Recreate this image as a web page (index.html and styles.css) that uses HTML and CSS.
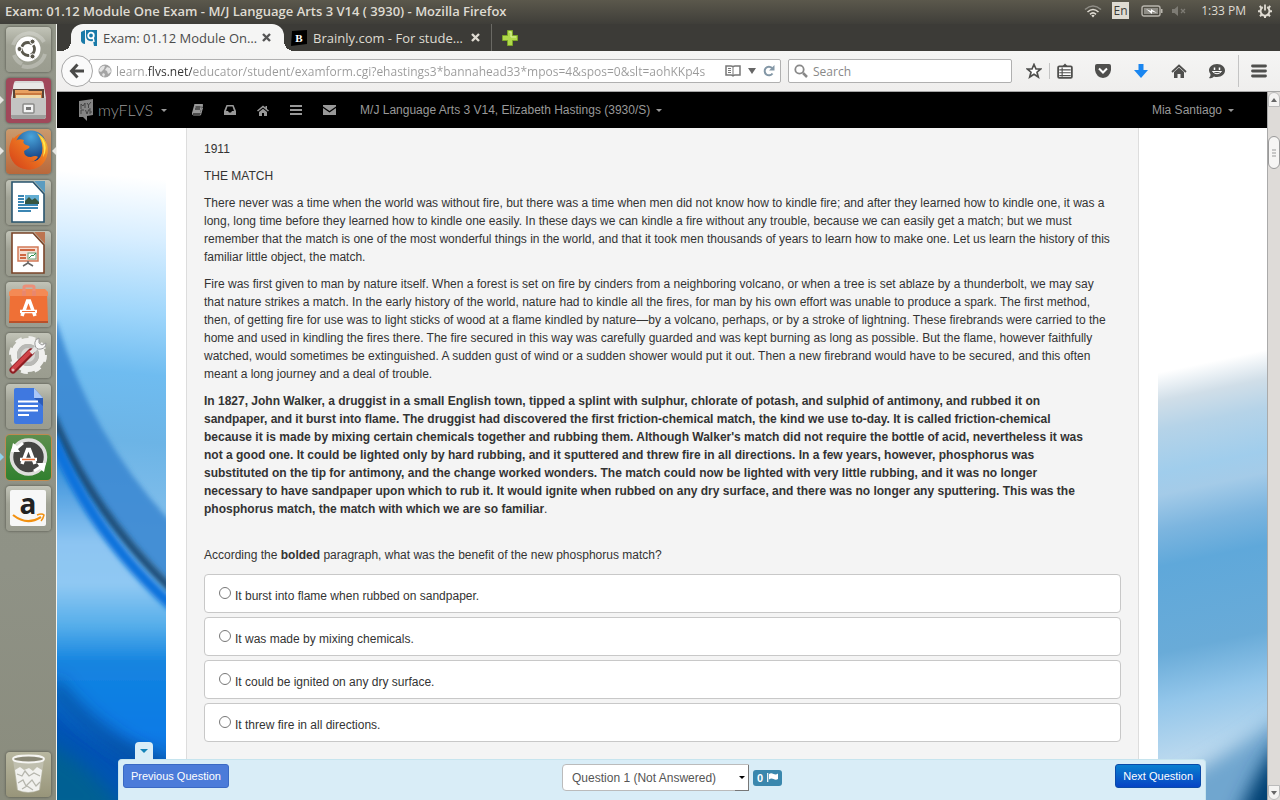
FILE: index.html
```html
<!DOCTYPE html>
<html lang="en">
  <head>
    <meta charset="UTF-8" />
    <meta name="viewport" content="width=device-width, initial-scale=1.0" />
    <title>Exam: 01.12 Module One Exam - M/J Language Arts 3 V14 ( 3930)</title>
    <link rel="stylesheet" href="styles.css">
  </head>
  <body>
    <!-- System panel -->
    <header class="panel">
      <div class="panel-title">Exam: 01.12 Module One Exam - M/J Language Arts 3 V14 ( 3930) - Mozilla Firefox</div>
      <div class="indicators">
        <svg width="18" height="14" viewBox="0 0 18 14" fill="none" stroke-width="1.6">
          <path d="M1 5.5Q9-1.5 17 5.5" stroke="#8f8d86"/>
          <path d="M3.5 8Q9 3 14.5 8" stroke="#dfdbd2"/>
          <path d="M6 10.3Q9 7.5 12 10.3" stroke="#dfdbd2"/>
          <path d="M7.3 11.5L9 13.5L10.7 11.5Q9 10.2 7.3 11.5Z" fill="#dfdbd2"/>
        </svg>
        <span class="lang">En</span>
        <svg class="battery" width="22" height="12" viewBox="0 0 22 12">
          <rect x="1" y="1" width="18" height="10" rx="2" fill="none" stroke="#b8b5ad" stroke-width="1.4"/>
          <rect x="3" y="3" width="14" height="6" fill="#8f8d86"/>
          <path d="M20 4h1.5v4H20z" fill="#b8b5ad"/>
          <path d="M5 4l5 2V4l6 4-5-1.500V9z" fill="#fff"/>
        </svg>
        <svg class="mute" width="16" height="12" viewBox="0 0 16 12">
          <path d="M1 4h2.500L7 1v10L3.500 8H1z" fill="#7d7b74"/>
          <path d="M10 4l4 4M14 4l-4 4" stroke="#7d7b74" stroke-width="1.3"/>
        </svg>
        <span class="clock">1:33 PM</span>
        <svg width="14" height="14" viewBox="0 0 14 14" fill="none" stroke="#dfdbd2">
          <path d="M4.800 3.200A4.500 4.500 0 1 0 9.200 3.200" stroke-width="2"/>
          <path d="M7 0.500V6.500" stroke-width="1.800"/>
          <path d="M3.300 3.600L1.700 2M10.700 3.600L12.300 2M2 7.300H0M12 7.300H14M3.700 10.500L2 12.300M10.300 10.500L12 12.300M7 12V14" stroke-width="2"/>
        </svg>
      </div>
    </header>

    <div class="desktop">
      <!-- Launcher -->
      <nav class="launcher" aria-label="Launcher">
        <button class="tile" aria-label="Dash">
          <svg viewBox="0 0 45 45">
            <path d="M7 18A17 17 0 0 1 38 15M39 27A18 18 0 0 1 16 39M8 28A16 16 0 0 0 16 37" fill="none" stroke="#fff" stroke-opacity=".25" stroke-width="4"/>
            <circle cx="22" cy="22" r="12.500" fill="#fff"/>
            <circle cx="22" cy="22" r="6.500" fill="none" stroke="#5a584d" stroke-width="2.800" stroke-dasharray="12 1.600" stroke-dashoffset="5"/>
            <g fill="#5a584d" stroke="#fff" stroke-width="1"><circle cx="13.500" cy="22" r="2.500"/><circle cx="26.500" cy="14.600" r="2.500"/><circle cx="26.500" cy="29.400" r="2.500"/></g>
          </svg>
        </button>
        <button class="tile files running" aria-label="Files">
          <svg viewBox="0 0 45 45">
            <path d="M8 5Q8 3 10 3H35Q37 3 37.500 5L40 20V38Q40 41 37 41H8Q5 41 5 38V20Z" fill="#d8d8d6"/>
            <path d="M8 5H37L39 18H6Z" fill="#e8e8e6"/>
            <path d="M7 11H38V20H7Z" fill="#5b4437"/>
            <path d="M9 12H22L23 13H36V20H9Z" fill="#e8a060"/>
            <path d="M9 15H36V20H9Z" fill="#c9783f"/><path d="M10 17H35V20H10Z" fill="#f0d9a8"/>
            <path d="M5 20H40V38Q40 41 37 41H8Q5 41 5 38Z" fill="#c4c4c3"/>
            <path d="M5 37H40V38Q40 41 37 41H8Q5 41 5 38Z" fill="#9e9e9c"/>
            <rect x="17" y="26" width="11" height="9" rx="1" fill="#f3f3f3" stroke="#8a8a89" stroke-width="1.500"/>
            <rect x="20" y="29" width="5" height="3" fill="#777"/>
          </svg>
        </button>
        <button class="tile firefox running active" aria-label="Firefox">
          <svg viewBox="0 0 45 45">
            <defs>
              <radialGradient id="globe" cx=".5" cy=".2" r=".8"><stop offset="0" stop-color="#49a5dc"/><stop offset="1" stop-color="#123a7c"/></radialGradient>
              <linearGradient id="fox" x1="1" y1="0" x2="0" y2="1"><stop offset="0" stop-color="#fbd83a"/><stop offset=".4" stop-color="#ee7a22"/><stop offset="1" stop-color="#d43c17"/></linearGradient>
            </defs>
            <circle cx="22.500" cy="21.500" r="19" fill="url(#fox)"/>
            <circle cx="25" cy="17" r="15.500" fill="url(#globe)"/>
            <path d="M31 4Q43 10 41.500 24Q39 39 24 40.500Q8 40 4 26Q2 16 7 8L9 12Q13 9 18 11Q16 14 20 16Q25 17 23 19L18 22Q18 28 25 28Q30 26 32 28Q29 33 23 33Q33 34 36 24Q38 14 31 4Z" fill="url(#fox)"/>
            <path d="M33 6Q42 13 39 24L37 28Q40 15 33 6Z" fill="#ffe84c"/>
          </svg>
        </button>
        <button class="tile" aria-label="LibreOffice Writer">
          <svg viewBox="0 0 45 45">
            <path d="M6 2H27L38 14V42H6Z" fill="#fff" stroke="#29546e" stroke-width="1.600"/>
            <path d="M28 1H39V13Z" fill="#5b9cc0"/>
            <path d="M12 16H18M12 19H18M12 22H18M12 25H32M12 28H32M12 31H25" stroke="#3b86b3" stroke-width="2"/>
            <rect x="19" y="15" width="14" height="9" fill="#62add2"/><path d="M19 24V21L23 17L26 20L29 18L33 22V24Z" fill="#35543f"/>
          </svg>
        </button>
        <button class="tile" aria-label="LibreOffice Impress">
          <svg viewBox="0 0 45 45">
            <path d="M6 2H27L38 14V42H6Z" fill="#fff" stroke="#7a4428" stroke-width="1.600"/>
            <path d="M28 1H39V13Z" fill="#bd7551"/>
            <rect x="12" y="16" width="20" height="14" fill="#f6ddd2" stroke="#d27957" stroke-width="1.500"/>
            <path d="M14 19H29M14 24H20M14 27H20" stroke="#cf6844" stroke-width="2"/>
            <rect x="22" y="22" width="8" height="6" fill="#fff" stroke="#6d9d75"/><path d="M23 27L26 24L27 25L30 22" stroke="#2c8f4b" fill="none"/>
            <path d="M22 30V32L17 35M22 32L27 35" stroke="#666" stroke-width="1.500" fill="none"/>
          </svg>
        </button>
        <button class="tile" aria-label="Software Center">
          <svg viewBox="0 0 45 45">
            <path d="M4 10H41L42 40H3Z" fill="#ef7036"/><path d="M3 39H42V41H3Z" fill="#b9502a"/>
            <path d="M3 10L6 7H39L42 10V14H3Z" fill="#f48a55"/>
            <path d="M18 12V5Q18 4 20 4H26Q28 4 28 5V12" fill="none" stroke="#ec8f78" stroke-width="3"/>
            <path d="M16 9H20V14H16ZM26 9H30V14H26Z" fill="#e9876c"/>
            <path d="M16 34L21.500 19H23.500L29 34M14 29.500H31" fill="none" stroke="#fff" stroke-width="3.500"/><path d="M16 29.500H29" stroke="#ef7036"/>
          </svg>
        </button>
        <button class="tile" aria-label="System Settings">
          <svg viewBox="0 0 45 45">
            <circle cx="22" cy="22" r="14" fill="none" stroke="#f0f0ee" stroke-width="6"/>
            <circle cx="22" cy="22" r="16.500" fill="none" stroke="#f0f0ee" stroke-width="5" stroke-dasharray="6.500 6.460"/>
            <circle cx="22" cy="22" r="11" fill="#b9b9b6"/><circle cx="22" cy="22" r="7" fill="#d8d8d5"/>
            <path d="M7 37L25 19" stroke="#8e1d22" stroke-width="7" stroke-linecap="round"/>
            <path d="M7 36L24 19" stroke="#cf4348" stroke-width="4" stroke-linecap="round"/>
            <path d="M25 20L31 14" stroke="#e3e3e2" stroke-width="4"/>
            <path d="M33 5Q28 7 29 12Q30 17 35 16Q40 15 40 10L36 12L33 10Z" fill="#f7f7f7" stroke="#999"/>
            <circle cx="7" cy="37" r="1.500" fill="#e8b4b4"/>
          </svg>
        </button>
        <button class="tile" aria-label="Documents">
          <svg viewBox="0 0 45 45">
            <path d="M10 4H28L37 14V38Q37 40 35 40H10Q8 40 8 38V6Q8 4 10 4Z" fill="#3f78e0"/>
            <path d="M28 4L37 14H28Z" fill="#a9c6f7"/><path d="M28 14H37V22Z" fill="#2a5cba"/>
            <path d="M12 17.500H32M12 22H32M12 26.500H32M12 31H23" stroke="#fff" stroke-width="2"/>
          </svg>
        </button>
        <button class="tile updater running" aria-label="Software Updater">
          <svg viewBox="0 0 45 45">
            <circle cx="22.500" cy="22" r="17" fill="#454543" stroke="#dededc" stroke-width="3.500"/>
            <path d="M5 17L7 8L11 11L16 7L18 9L12 14L14 17Z" fill="#fff"/><path d="M40 28L38 37L34 34L29 37L27 35L33 31L31 28Z" fill="#fff"/>
            <path d="M16 29L21.500 14.500H23.500L29 29M14 24.500H31" fill="none" stroke="#fff" stroke-width="3.500"/><path d="M16 24.500H29" stroke="#e96e37" stroke-width="1.500"/>
          </svg>
        </button>
        <button class="tile" aria-label="Amazon">
          <svg viewBox="0 0 45 45">
            <rect x="4" y="4" width="36" height="36" rx="2" fill="#f7f7f7"/>
            <text x="22" y="28" class="amazon-letter">a</text>
            <path d="M7 29Q21 40 35 31" fill="none" stroke="#f29111" stroke-width="2.200"/><path d="M31 29Q36 27 38 29Q37 33 35 35" fill="none" stroke="#f29111" stroke-width="1.500"/>
          </svg>
        </button>
        <button class="tile trash" aria-label="Trash">
          <svg viewBox="0 0 45 45">
            <path d="M7 7L11 38Q22 44 34 38L38 7Z" fill="#c9c9bd" fill-opacity=".65"/>
            <path d="M9 18L14 15L18 18L23 16L27 19L31 15L36 18L33 38Q22 42 12 38Z" fill="#f1f1ee"/>
            <path d="M11 22L16 24L19 19L23 24L28 21L34 24M12 31L17 28L20 34L26 28L30 34L34 30M16 37L21 34L27 38" fill="none" stroke="#b5b5ac" stroke-width="1.300"/>
            <ellipse cx="22.500" cy="7" rx="15.500" ry="3.500" fill="#8a8876" stroke="#f5f5f2" stroke-width="1.800"/>
          </svg>
        </button>
      </nav>

      <div class="window">
        <!-- Browser tabs -->
        <div class="tabs">
          <div class="tab current">
            <svg class="favicon" width="16" height="16" viewBox="0 0 16 16">
              <path d="M0 2L4 0V14Q1 14 0 11Z" fill="#197aa8"/><path d="M5 0H16V16H13L12 11Q5 12 5 6Z" fill="#197aa8"/>
              <circle cx="10" cy="5.500" r="2.800" fill="none" stroke="#fff" stroke-width="1.800"/><path d="M12 7L13 12" stroke="#fff" stroke-width="1.500"/>
            </svg>
            <span class="tab-title">Exam: 01.12 Module On…</span>
            <button class="tab-close" aria-label="Close tab"><svg width="9" height="9" viewBox="0 0 9 9"><path d="M1 1L8 8M8 1L1 8" stroke="currentColor" stroke-width="2.400"/></svg></button>
          </div>
          <div class="tab">
            <svg class="favicon" width="16" height="16" viewBox="0 0 16 16"><path d="M1 1L16 0V14L0 16Z" fill="#000"/><text x="8" y="12" class="brainly-letter">B</text></svg>
            <span class="tab-title">Brainly.com - For stude…</span>
            <button class="tab-close" aria-label="Close tab"><svg width="9" height="9" viewBox="0 0 9 9"><path d="M1 1L8 8M8 1L1 8" stroke="currentColor" stroke-width="2.400"/></svg></button>
          </div>
          <button class="new-tab" aria-label="New tab"><svg width="16" height="16" viewBox="0 0 16 16"><path d="M5.500.5H10.500V5.500H15.500V10.500H10.500V15.500H5.500V10.500H.5V5.500H5.500Z" fill="#b0d94a" stroke="#7ba428"/><path d="M7 2H9V7H14" fill="none" stroke="#dcf3a0"/></svg></button>
        </div>

        <!-- Navigation toolbar -->
        <div class="toolbar">
          <button class="back" aria-label="Back"><svg width="16" height="16" viewBox="0 0 16 16" fill="none" stroke="#4a4a48" stroke-width="3"><path d="M8.500 1.500L2.500 8L8.500 14.500M3 8H15"/></svg></button>
          <div class="urlbar">
            <svg width="14" height="14" viewBox="0 0 14 14"><circle cx="7" cy="7" r="6.500" fill="#a4a4a4"/><path d="M2 4Q5 1 7 2L6 5L3 8L1 7ZM9 3L12 4L13 8L10 10L9 7L7 6ZM5 9L7 10L6 13L4 11Z" fill="#e4e4e4"/></svg>
            <input class="url" type="text" aria-label="Address" value="learn.flvs.net/educator/student/examform.cgi?ehastings3*bannahead33*mpos=4&amp;spos=0&amp;slt=aohKKp4s">
            <svg width="16" height="14" viewBox="0 0 16 14" fill="none" stroke="#777" stroke-width="1.500"><path d="M1 2H6Q8 2 8 3.500Q8 2 10 2H15V11H10Q8 11 8 12.500Q8 11 6 11H1Z"/><path d="M8 3.500V12M3 4.500H6M3 6.500H6M3 8.500H6" stroke-width="1"/></svg>
            <svg width="8" height="6" viewBox="0 0 8 6"><path d="M0 0H8L4 6Z" fill="#666"/></svg>
            <svg width="12" height="12" viewBox="0 0 12 12"><path d="M9.500 8.500A4.300 4.300 0 1 1 9 3" fill="none" stroke="#8397a6" stroke-width="2"/><path d="M11.500 0V5.500H6Z" fill="#8397a6"/></svg>
          </div>
          <div class="searchbar">
            <svg width="14" height="14" viewBox="0 0 14 14" fill="none" stroke="#888"><circle cx="5.500" cy="5.500" r="4.200" stroke-width="1.800"/><path d="M9 9L13 13" stroke-width="2.500"/></svg>
            <input type="search" aria-label="Search" placeholder="Search">
          </div>
          <div class="tools">
            <button aria-label="Bookmark"><svg width="16" height="16" viewBox="0 0 16 16"><path d="M8 1.500L10 6H14.700L11 9.200L12.300 14L8 11.300L3.700 14L5 9.200L1.300 6H6Z" fill="#fff" stroke="#4f4f4d" stroke-width="1.700"/></svg></button>
            <button class="split" aria-label="Bookmarks list"><svg width="16" height="16" viewBox="0 0 14 14"><path d="M4.500 3L7 .5L9.500 3" fill="#4f4f4d"/><rect x="1" y="3" width="12" height="10" rx="1" fill="#fff" stroke="#4f4f4d" stroke-width="1.600"/><path d="M2 6H12M2 8.500H12M2 11H12M4.500 4V12" stroke="#4f4f4d" stroke-width="1"/></svg></button>
            <button aria-label="Pocket"><svg width="16" height="14" viewBox="0 0 16 14"><path d="M0 2Q0 0 2 0H14Q16 0 16 2V6Q15 13 8 14Q1 13 0 6Z" fill="#4f4f4d"/><path d="M4 4.500L8 8.500L12 4.500" fill="none" stroke="#fff" stroke-width="2"/></svg></button>
            <button aria-label="Downloads"><svg width="14" height="14" viewBox="0 0 14 14"><path d="M4.500 0H9.500V6H14L7 14L0 6H4.500Z" fill="#1a86f0"/></svg></button>
            <button aria-label="Home"><svg width="16" height="14" viewBox="0 0 16 14"><path d="M1 8L8 1.500L15 8" fill="none" stroke="#4f4f4d" stroke-width="1.800"/><path d="M3 8L8 3.500L13 8V14H9.500V10H6.500V14H3Z" fill="#4f4f4d"/></svg></button>
            <button aria-label="Chat"><svg width="16" height="15" viewBox="0 0 16 15"><path d="M8 0C13 0 16 3 16 6.500S13 13 8 13Q6 13 5 12.500Q3 15 0 14Q2 12 1.500 10Q0 8 0 6.500C0 3 3 0 8 0Z" fill="#4f4f4d"/><path d="M5.500 3.500V6M10.500 3.500V6" stroke="#fff" stroke-width="1.500"/><path d="M3.500 7.500Q8 12 12.500 7.500Z" fill="#4f4f4d" stroke="#fff" stroke-width="1"/></svg></button>
          </div>
          <button class="menu" aria-label="Menu"><svg width="16" height="14" viewBox="0 0 16 14"><path d="M1.500 2H14.500M1.500 7H14.500M1.500 12H14.500" stroke="#4f4f4d" stroke-width="2.800" stroke-linecap="round"/></svg></button>
        </div>

        <div class="viewport">
          <div class="page">
            <!-- Site navigation -->
            <nav class="navbar">
              <a class="brand" href="#">
                <svg width="14" height="22" viewBox="0 0 14 22"><path d="M0 2L14 0V16L8 17V22L4 18H0Z" fill="#858585"/><path d="M2 10V5L4 7L6 4V9M8 4L9.500 6L12 3M9.500 6V9M2 15V11H5M6.500 11L8 15L9.500 11M12 10H10V12H12V14H10" fill="none" stroke="#444" stroke-width="1"/></svg>
                myFLVS <i class="caret"></i>
              </a>
              <div class="nav-icons">
                <a href="#" aria-label="Gradebook"><svg width="12" height="12" viewBox="0 0 12 12"><path d="M3.500 0H12L9.500 9H1.500Q1 11 2.500 11H9.500L11.500 4" fill="none" stroke="#999" stroke-width="1"/><path d="M3.500 0H11.500L9 9H1Z" fill="#999"/><path d="M4.500 3H9.500M4 5H9" stroke="#111"/></svg></a>
                <a href="#" aria-label="Inbox"><svg width="12" height="10" viewBox="0 0 12 10"><path d="M2.500 0H9.500L12 6V10H0V6ZM3.500 1.500L2 6H4L5 7.500H7L8 6H10L8.500 1.500Z" fill="#999" fill-rule="evenodd"/></svg></a>
                <a href="#" aria-label="Home"><svg width="12" height="11" viewBox="0 0 12 11"><path d="M0 5.500L6 .5L8.500 2.500V1H10V4L12 5.500L11 6.500L6 2.500L1 6.500Z" fill="#999"/><path d="M2 7L6 3.800L10 7V11H7V8H5V11H2Z" fill="#999"/></svg></a>
                <a href="#" aria-label="Lessons"><svg width="12" height="10" viewBox="0 0 12 10"><path d="M0 1H12M0 5H12M0 9H12" stroke="#999" stroke-width="2"/></svg></a>
                <a href="#" aria-label="Messages"><svg width="13" height="10" viewBox="0 0 13 10"><path d="M0 0H13V1.500L6.500 6L0 1.500ZM0 3L6.500 7.500L13 3V10H0Z" fill="#999"/></svg></a>
              </div>
              <a class="course" href="#">M/J Language Arts 3 V14, Elizabeth Hastings (3930/S) <i class="caret"></i></a>
              <a class="user" href="#">Mia Santiago <i class="caret"></i></a>
            </nav>

            <div class="backdrop">
              <svg class="side" viewBox="0 0 109 672" preserveAspectRatio="none">
                <defs>
                  <linearGradient id="sky" gradientUnits="userSpaceOnUse" x1="60" y1="0" x2="0" y2="672">
                    <stop offset=".07" stop-color="#fff"/><stop offset=".16" stop-color="#d8eeff"/><stop offset=".27" stop-color="#9fd6fb"/><stop offset=".36" stop-color="#6fbcf0"/><stop offset=".46" stop-color="#6cb4e6"/><stop offset=".6" stop-color="#85c0ec"/>
                  </linearGradient>
                  <linearGradient id="sea" x1="0" y1="0" x2="0" y2="1">
                    <stop offset="0" stop-color="#1372d0"/><stop offset=".16" stop-color="#4296dc"/><stop offset=".33" stop-color="#8dc5f2"/><stop offset=".43" stop-color="#8fc8f3"/><stop offset=".53" stop-color="#56aeea"/><stop offset=".62" stop-color="#1484e0"/><stop offset=".8" stop-color="#0a7ae6"/><stop offset="1" stop-color="#0a5aa8"/>
                  </linearGradient>
                  <filter id="soft" x="-20%" y="-20%" width="140%" height="140%"><feGaussianBlur stdDeviation="2.500"/></filter>
                  <filter id="softer" x="-30%" y="-30%" width="160%" height="160%"><feGaussianBlur stdDeviation="9"/></filter>
                </defs>
                <rect width="109" height="672" fill="url(#sky)"/>
                <path d="M-10 190L0 195Q35 310 115 395V480L-10 340Z" fill="#3583d0" fill-opacity=".8" filter="url(#soft)"/>
                <path d="M-10 280Q30 380 120 462V690H-10Z" fill="url(#sea)" filter="url(#soft)"/>
                <path d="M-5 288Q35 385 115 462" fill="none" stroke="#1f4f7b" stroke-width="9" filter="url(#soft)"/>
                <path d="M-5 308Q35 405 115 478" fill="none" stroke="#0a72dc" stroke-width="11" filter="url(#soft)"/>
                <path d="M-20 560Q30 615 130 655V700H-20Z" fill="#0552b4" filter="url(#softer)"/>
                <path d="M-20 610Q30 630 75 690H-20Z" fill="#006093" filter="url(#softer)"/>
                <path d="M-5 555Q40 615 115 642" fill="none" stroke="#02377f" stroke-width="9" filter="url(#softer)"/>
              </svg>
              <main class="column">
                <article class="exam">
                  <p>1911</p>
                  <p>THE MATCH</p>
                  <p>There never was a time when the world was without fire, but there was a time when men did not know how to kindle fire; and after they learned how to kindle one, it was a long, long time before they learned how to kindle one easily. In these days we can kindle a fire without any trouble, because we can easily get a match; but we must remember that the match is one of the most wonderful things in the world, and that it took men thousands of years to learn how to make one. Let us learn the history of this familiar little object, the match.</p>
                  <p>Fire was first given to man by nature itself. When a forest is set on fire by cinders from a neighboring volcano, or when a tree is set ablaze by a thunderbolt, we may say that nature strikes a match. In the early history of the world, nature had to kindle all the fires, for man by his own effort was unable to produce a spark. The first method, then, of getting fire for use was to light sticks of wood at a flame kindled by nature—by a volcano, perhaps, or by a stroke of lightning. These firebrands were carried to the home and used in kindling the fires there. The fire secured in this way was carefully guarded and was kept burning as long as possible. But the flame, however faithfully watched, would sometimes be extinguished. A sudden gust of wind or a sudden shower would put it out. Then a new firebrand would have to be secured, and this often meant a long journey and a deal of trouble.</p>
                  <p class="excerpt"><b>In 1827, John Walker, a druggist in a small English town, tipped a splint with sulphur, chlorate of potash, and sulphid of antimony, and rubbed it on sandpaper, and it burst into flame. The druggist had discovered the first friction-chemical match, the kind we use to-day. It is called friction-chemical because it is made by mixing certain chemicals together and rubbing them. Although Walker's match did not require the bottle of acid, nevertheless it was not a good one. It could be lighted only by hard rubbing, and it sputtered and threw fire in all directions. In a few years, however, phosphorus was substituted on the tip for antimony, and the change worked wonders. The match could now be lighted with very little rubbing, and it was no longer necessary to have sandpaper upon which to rub it. It would ignite when rubbed on any dry surface, and there was no longer any sputtering. This was the phosphorus match, the match with which we are so familiar</b>.</p>
                  <fieldset class="question">
                    <legend>According the <b>bolded</b> paragraph, what was the benefit of the new phosphorus match?</legend>
                    <label class="answer"><input type="radio" name="q1"> It burst into flame when rubbed on sandpaper.</label>
                    <label class="answer"><input type="radio" name="q1"> It was made by mixing chemicals.</label>
                    <label class="answer"><input type="radio" name="q1"> It could be ignited on any dry surface.</label>
                    <label class="answer"><input type="radio" name="q1"> It threw fire in all directions.</label>
                  </fieldset>
                </article>
              </main>
              <svg class="side" viewBox="0 0 109 672" preserveAspectRatio="none">
                <defs>
                  <linearGradient id="mist" x1="0" y1="0" x2="0" y2="1">
                    <stop offset=".34" stop-color="#fff"/><stop offset=".38" stop-color="#d0dee8"/><stop offset=".42" stop-color="#b5d3e8"/><stop offset=".48" stop-color="#a0cdec"/><stop offset=".51" stop-color="#a4cbe8"/><stop offset=".56" stop-color="#7cb5df"/><stop offset=".61" stop-color="#5fa8da"/><stop offset=".73" stop-color="#69abd8"/><stop offset=".8" stop-color="#93c6ea"/><stop offset=".91" stop-color="#c8dff0"/><stop offset="1" stop-color="#e2effa"/>
                  </linearGradient>
                </defs>
                <g transform="skewY(-12)"><rect width="109" height="720" fill="url(#mist)"/></g>
                <path d="M125 585Q90 615 20 652L30 700H130Z" fill="#6fa6cf" filter="url(#softer)"/>
                <path d="M130 605Q105 625 75 700H130Z" fill="#053f72" filter="url(#softer)"/>
              </svg>
            </div>

            <!-- Question controls stay above the exam text -->
            <div class="question-bar">
              <button class="handle" aria-label="Hide controls"><svg width="8" height="4" viewBox="0 0 8 4"><path d="M0 0H8L4 4Z" fill="#1583b8"/></svg></button>
              <button class="btn previous">Previous Question</button>
              <div class="jump">
                <div class="select-box">
                  <select aria-label="Question"><option>Question 1 (Not Answered)</option></select>
                </div>
                <span class="flags">0 <svg width="11" height="9" viewBox="0 0 11 9"><path d="M.7 0V9" stroke="#fff" stroke-width="1.200"/><path d="M2 1Q4-.5 6.500 1Q9 2 11 .5V6Q9 7.500 6.500 6Q4 5 2 6.500Z" fill="#fff"/></svg></span>
              </div>
              <button class="btn next">Next Question</button>
            </div>
          </div>

          <div class="scrollbar">
            <div class="scroll-up"><svg width="6" height="4" viewBox="0 0 6 4"><path d="M0 4H6L3 0Z" fill="#666"/></svg></div>
            <div class="track"><div class="thumb"><svg width="4" height="8" viewBox="0 0 4 8"><path d="M0 1H4M0 4H4M0 7H4" stroke="#999"/></svg></div></div>
            <div class="scroll-down"><svg width="6" height="4" viewBox="0 0 6 4"><path d="M0 0H6L3 4Z" fill="#666"/></svg></div>
          </div>
        </div>
      </div>
    </div>
  </body>
</html>
```
FILE: styles.css
```css
* {
  box-sizing: border-box;
}

body {
  margin: 0;
  height: 100vh;
  display: flex;
  flex-direction: column;
  overflow: hidden;
  font-family: "Liberation Sans", Arial, sans-serif;
  font-size: 12px;
  line-height: 18px;
  color: #333;
}

button {
  padding: 0;
  border: 0;
  background: none;
  font: inherit;
}

svg {
  display: block;
  flex: none;
}

a {
  color: inherit;
  text-decoration: none;
}

/* System panel */
.panel {
  flex: none;
  height: 24px;
  padding: 0 8px 3px 5px;
  display: flex;
  align-items: center;
  justify-content: space-between;
  background: linear-gradient(#5b584c, #3f3e39);
  color: #dfdbd2;
  font-family: "Open Sans", sans-serif;
}

.panel-title {
  font-size: 13px;
  font-weight: 600;
}

.indicators {
  display: flex;
  align-items: center;
}

.lang {
  margin: 0 12px 0 10px;
  width: 17px;
  line-height: 17px;
  text-align: center;
  background: #dfdbd2;
  color: #3c3b37;
}

.mute {
  margin: 0 14px 0 8px;
}

.clock {
  margin-right: 12px;
}

.desktop {
  flex: 1;
  min-height: 0;
  display: flex;
}

/* Launcher */
.launcher {
  flex: none;
  width: 57px;
  padding: 3px 5px 3px 6px;
  display: flex;
  flex-direction: column;
  gap: 6px;
  border-right: 1px solid #f4f4f0;
  background: linear-gradient(#939689, #8f9286 70%, #8a8c7d);
}

.tile {
  position: relative;
  width: 45px;
  height: 45px;
  border-radius: 4px;
  background: linear-gradient(#c2c4b8, #a1a396 40%, #9a9c8f);
  box-shadow: 0 0 2px 1px rgba(70, 72, 62, 0.45);
}

.files {
  background: #a0485a;
}

.firefox {
  background: linear-gradient(#cb9a6d, #b9683a);
}

.updater {
  background: linear-gradient(#5d8e4d, #31802f);
  box-shadow: 0 0 0 1px #c08a50;
}

.trash {
  margin-top: auto;
  background: linear-gradient(#b8b7a0, #98957a);
}

/* Arrows next to running programs */
.running::before,
.active::after {
  content: "";
  position: absolute;
  top: 18px;
  border: 4px solid transparent;
}

.running::before {
  left: -6px;
  border-left-color: #e6e6e2;
  border-right-width: 0;
}

.active::after {
  right: -5px;
  border-right-color: #e6e6e2;
  border-left-width: 0;
}

.updater::before {
  border-left-color: #8fd0ea;
}

.amazon-letter {
  font: bold 28px "Open Sans", sans-serif;
  fill: #222;
  text-anchor: middle;
}

.brainly-letter {
  font: bold 11px "Liberation Serif", serif;
  fill: #fff;
  text-anchor: middle;
}

/* Browser window */
.window {
  flex: 1;
  min-width: 0;
  display: flex;
  flex-direction: column;
}

.tabs {
  flex: none;
  height: 27px;
  padding-left: 14px;
  display: flex;
  background: #3c3b37;
  font-family: "Open Sans", sans-serif;
  font-size: 13px;
}

.tab {
  width: 208px;
  padding: 0 11px 0 7px;
  display: flex;
  align-items: center;
  border-right: 1px solid #6a6964;
  color: #dfdbd2;
}

.tab.current {
  position: relative;
  width: 213px;
  padding: 0 13px 0 10px;
  border: 0;
  border-radius: 12px 12px 0 0;
  background: #f5f5f4;
  color: #4c4c4c;
}

/* Curved feet of the open tab */
.tab.current::before,
.tab.current::after {
  content: "";
  position: absolute;
  bottom: 0;
  width: 10px;
  height: 10px;
}

.tab.current::before {
  right: 100%;
  background: radial-gradient(circle at 0 0, transparent 10px, #f5f5f4 10px);
}

.tab.current::after {
  left: 100%;
  background: radial-gradient(circle at 100% 0, transparent 10px, #f5f5f4 10px);
}

.tab-title {
  flex: 1;
  margin-left: 6px;
  white-space: nowrap;
}

.tab-close {
  color: #dfdbd2;
}

.current .tab-close {
  color: #555;
}

.new-tab {
  margin-left: 10px;
}

.toolbar {
  flex: none;
  height: 41px;
  padding: 0 13px 0 4px;
  display: flex;
  align-items: center;
  border-bottom: 1px solid #a6a6a6;
  background: linear-gradient(#f5f5f4, #efeeed);
}

.back {
  z-index: 1;
  width: 32px;
  height: 32px;
  display: grid;
  place-items: center;
  border: 1px solid #a8a8a8;
  border-radius: 50%;
  background: #fafafa;
}

.urlbar,
.searchbar {
  height: 24px;
  display: flex;
  align-items: center;
  border: 1px solid #b0b0b0;
  border-radius: 2px;
  background: #fff;
}

.urlbar {
  flex: 1;
  min-width: 0;
  margin-left: -4px;
  padding: 0 5px 0 8px;
  gap: 7px;
}

.urlbar input,
.searchbar input {
  min-width: 0;
  flex: 1;
  padding: 0;
  border: 0;
  outline: 0;
  background: none;
  font: 12px "Open Sans", sans-serif;
  color: #999;
}

/* The domain part of the address is darker */
.urlbar .url {
  margin-left: -3px;
  background: linear-gradient(to right, #999 32px, #333 32px, #333 76px, #999 76px);
  background-clip: text;
  -webkit-background-clip: text;
  color: transparent;
}

.searchbar {
  width: 224px;
  margin-left: 7px;
  padding: 0 5px;
  gap: 5px;
}

.searchbar input::placeholder {
  color: #888;
}

.tools {
  margin-left: 14px;
  display: flex;
  align-items: center;
  gap: 22px;
}

.tools button {
  display: grid;
  justify-items: center;
  width: 16px;
}

.tools .split {
  width: 24px;
  margin-left: -15px;
  padding-left: 7px;
  border-left: 1px solid #c4c4c4;
}

.menu {
  height: 32px;
  margin-left: 13px;
  padding-left: 12px;
  border-left: 1px solid #c4c4c4;
}

.viewport {
  flex: 1;
  min-height: 0;
  display: flex;
}

.page {
  position: relative;
  flex: 1;
  min-width: 0;
  display: flex;
  flex-direction: column;
  background: #fff;
}

/* Site navigation */
.navbar {
  flex: none;
  height: 36px;
  padding: 0 33px 0 22px;
  display: flex;
  align-items: center;
  background: #000;
  color: #999;
}

.navbar a {
  display: flex;
  align-items: center;
}

.brand {
  gap: 5px;
  font-family: Lato, sans-serif;
  font-size: 16px;
  font-weight: 300;
}

.brand .caret {
  margin-left: 3px;
}

.nav-icons {
  margin: 0 24px;
  display: flex;
  align-items: center;
  gap: 21px;
}

.caret {
  margin-left: 6px;
  border: 3px solid transparent;
  border-top-color: currentColor;
  border-bottom-width: 0;
}

.user {
  margin-left: auto;
}

/* Exam text between the blue side pictures */
.backdrop {
  flex: 1;
  min-height: 0;
  display: grid;
  grid-template-columns: 109px 1fr 109px;
  overflow: hidden;
}

.side {
  width: 100%;
  height: 100%;
}

.column {
  padding: 0 19px 0 20px;
  background: #fff;
}

.exam {
  height: 100%;
  padding: 12px 17px;
  border: solid #ddd;
  border-width: 0 1px;
  background: #f4f4f4;
}

.exam p {
  margin: 0 0 9px;
  padding-right: 8px;
}

.exam .excerpt {
  margin-bottom: 28px;
  padding-right: 34px;
}

.question {
  margin: 0;
  padding: 0;
  border: 0;
  min-width: 0;
}

.question legend {
  padding: 0;
  margin-bottom: 10px;
}

.answer {
  height: 39px;
  margin-bottom: 4px;
  padding: 4px 14px 0;
  display: flex;
  align-items: center;
  gap: 4px;
  border: 1px solid #c8c8c8;
  border-radius: 4px;
  background: #fff;
}

.answer input {
  appearance: none;
  width: 12px;
  height: 12px;
  margin: 0 0 5px;
  border: 1px solid #777;
  border-radius: 50%;
  background: #fff;
}

/* Question controls */
.question-bar {
  position: absolute;
  left: 61px;
  right: 61px;
  bottom: 0;
  height: 41px;
  padding: 4px 4px 0;
  display: flex;
  align-items: flex-start;
  justify-content: space-between;
  border: 1px solid #c6e4ee;
  border-bottom: 0;
  border-radius: 4px 4px 0 0;
  background: #d9edf7;
}

.handle {
  position: absolute;
  left: 16px;
  top: -18px;
  width: 18px;
  height: 18px;
  display: grid;
  place-items: center;
  border-radius: 4px 4px 0 0;
  background: #d9edf7;
}

.btn {
  height: 24px;
  padding: 0 7px;
  border: 1px solid #3a69c4;
  border-radius: 3px;
  background: #4b7bd9;
  font-size: 11px;
  color: #fff;
}

.next {
  border-color: #0a4aa8;
  background: linear-gradient(#0a7fd0, #0644c4);
}

.jump {
  display: flex;
  align-items: center;
  gap: 4px;
}

.select-box {
  position: relative;
}

.select-box select {
  appearance: none;
  width: 187px;
  height: 27px;
  padding: 0 20px 0 9px;
  border: 1px solid #bbb;
  border-radius: 4px 0 0 4px;
  background: #fff;
  font: 12px "Liberation Sans", Arial, sans-serif;
  color: #555;
}

/* Arrow box of the drop-down */
.select-box::before {
  content: "";
  position: absolute;
  right: 0;
  top: 1px;
  bottom: 0;
  width: 13px;
  border: solid #777;
  border-width: 0 1px 1px 0;
  pointer-events: none;
}

.select-box::after {
  content: "";
  position: absolute;
  right: 4px;
  top: 12px;
  border: 3px solid transparent;
  border-top-color: #000;
  border-bottom-width: 0;
  pointer-events: none;
}

.flags {
  height: 16px;
  padding: 0 4px;
  display: flex;
  align-items: center;
  gap: 4px;
  border-radius: 3px;
  background: #3a87ad;
  font-size: 11px;
  font-weight: bold;
  color: #fff;
}

/* Page scrollbar */
.scrollbar {
  flex: none;
  width: 13px;
  display: flex;
  flex-direction: column;
  border-left: 1px solid #aaa;
  background: #dedbd8;
}

.scroll-up,
.scroll-down {
  height: 15px;
  display: grid;
  place-items: center;
  border: 1px solid #bbb;
  border-radius: 6px 6px 0 0;
  background: #f4f3f2;
}

.scroll-down {
  border-radius: 0 0 6px 6px;
}

.track {
  flex: 1;
  padding-top: 29px;
}

.thumb {
  height: 33px;
  display: grid;
  place-items: center;
  border: 1px solid #999;
  border-radius: 6px;
  background: #f6f5f4;
}
```
